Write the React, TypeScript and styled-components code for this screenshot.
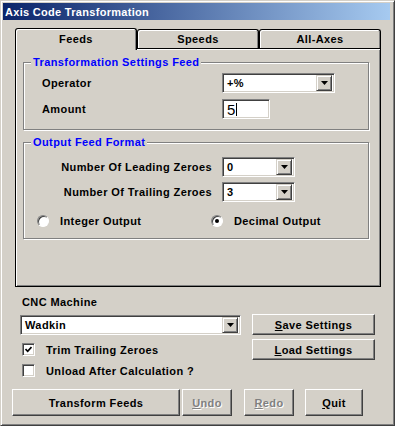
import { createGlobalStyle, styled } from "styled-components";

const GlobalStyle = createGlobalStyle`
  html, body {
    margin: 0;
    padding: 0;
    background: #d4d0c8;
  }
  body {
    font-family: "Liberation Sans", Arial, sans-serif;
    font-size: 11px;
    font-weight: bold;
    letter-spacing: 0.4px;
    color: #000;
  }
`;

const Window = styled.div`
  width: 395px;
  height: 426px;
  box-sizing: border-box;
  background: #d4d0c8;
  border: 1px solid;
  border-color: #d4d0c8 #404040 #404040 #d4d0c8;
  box-shadow: inset 1px 1px 0 #fff, inset -1px -1px 0 #808080;
  padding: 2px 4px 0 2px;
  display: flex;
  flex-direction: column;
`;

const TitleBar = styled.div`
  height: 17px;
  display: flex;
  align-items: center;
  padding-left: 2px;
  background: linear-gradient(to right, #0a246a, #a6caf0);
  color: #fff;
  letter-spacing: 0.3px;
`;

const Body = styled.div`
  padding: 8px 0 0 9px;
  display: flex;
  flex-direction: column;
`;

const TabControl = styled.div`
  margin-left: 3px;
  width: 366px;
  display: flex;
  flex-direction: column;
`;

const TabStrip = styled.div`
  display: flex;
  align-items: flex-end;
  height: 20px;
`;

const Tab = styled.div<{ $active?: boolean }>`
  width: 122px;
  box-sizing: border-box;
  height: ${(p) => (p.$active ? "22px" : "19px")};
  margin-bottom: ${(p) => (p.$active ? "-2px" : "0")};
  position: relative;
  z-index: ${(p) => (p.$active ? 1 : 0)};
  background: #d4d0c8;
  border: 1px solid #000;
  border-bottom: none;
  border-radius: 3px 3px 0 0;
  box-shadow: inset 1px 1px 0 #fff, inset -1px 0 0 #808080;
  display: flex;
  justify-content: center;
  padding-top: ${(p) => (p.$active ? "4px" : "3px")};
`;

const Panel = styled.div`
  height: 239px;
  box-sizing: border-box;
  border: 1px solid #000;
  box-shadow: inset 1px 1px 0 #fff, inset -1px -1px 0 #808080;
  padding: 7px 0 0 7px;
  display: flex;
  flex-direction: column;
`;

const GroupBox = styled.fieldset<{ $gap?: number }>`
  margin: ${(p) => p.$gap ?? 0}px 0 0 0;
  padding: 0;
  width: 346px;
  box-sizing: border-box;
  border: 1px solid #808080;
  box-shadow: inset 1px 1px 0 #fff, 1px 1px 0 #fff;
  min-inline-size: 0;
`;

const Legend = styled.legend`
  margin-left: 7px;
  padding: 0 2px;
  line-height: 13px;
  color: #0000ff;
  background: #d4d0c8;
`;

const SettingsGrid = styled.div`
  display: grid;
  grid-template-columns: 180px 1fr;
  grid-auto-rows: 20px;
  row-gap: 6px;
  align-items: center;
  padding: 4px 0 10px 18px;
`;

const FormatGrid = styled.div`
  display: grid;
  grid-template-columns: 188px 1fr;
  grid-auto-rows: 20px;
  column-gap: 10px;
  row-gap: 5px;
  align-items: center;
  padding-top: 8px;
`;

const RightLabel = styled.span`
  text-align: right;
`;

const RadioRow = styled.div`
  display: flex;
  height: 14px;
  margin: 12px 0 10px 13px;
`;

const RadioItem = styled.label<{ $width?: number }>`
  display: flex;
  align-items: center;
  gap: 11px;
  width: ${(p) => (p.$width ? `${p.$width}px` : "auto")};
`;

const RadioCircle = styled.span<{ $checked?: boolean }>`
  width: 12px;
  height: 12px;
  box-sizing: border-box;
  border-radius: 50%;
  border: 1px solid;
  border-color: #808080 #fff #fff #808080;
  box-shadow: inset 1px 1px 0 #404040;
  background: #fff;
  display: flex;
  align-items: center;
  justify-content: center;
  &::after {
    content: "";
    width: 4px;
    height: 4px;
    border-radius: 50%;
    background: ${(p) => (p.$checked ? "#000" : "transparent")};
  }
`;

const Sunken = styled.div<{ $width: number }>`
  width: ${(p) => p.$width}px;
  height: 20px;
  box-sizing: border-box;
  border: 1px solid;
  border-color: #808080 #fff #fff #808080;
  box-shadow: inset 1px 1px 0 #404040, inset -1px -1px 0 #d4d0c8;
  background: #fff;
  display: flex;
  align-items: center;
  padding: 2px 2px 2px 4px;
`;

const ComboText = styled.span`
  flex: 1;
`;

const DropButton = styled.span`
  width: 16px;
  height: 16px;
  box-sizing: border-box;
  background: #d4d0c8;
  border: 1px solid;
  border-color: #d4d0c8 #404040 #404040 #d4d0c8;
  box-shadow: inset 1px 1px 0 #fff, inset -1px -1px 0 #808080;
  display: flex;
  align-items: center;
  justify-content: center;
`;

const EditText = styled.span`
  font-size: 15px;
  font-weight: normal;
  letter-spacing: 0;
  display: flex;
  align-items: center;
`;

const Caret = styled.span`
  width: 1px;
  height: 13px;
  background: #000;
  margin-left: 1px;
`;

const CncLabel = styled.div`
  margin: 9px 0 0 10px;
  line-height: 13px;
`;

const MachineGrid = styled.div`
  display: grid;
  grid-template-columns: 221px 123px;
  grid-template-rows: 21px 21px 13px;
  column-gap: 11px;
  row-gap: 4px;
  align-items: center;
  margin: 5px 0 0 8px;
`;

const CheckItem = styled.label`
  display: flex;
  align-items: center;
  gap: 11px;
  margin-left: 2px;
`;

const CheckBox = styled.span`
  width: 13px;
  height: 13px;
  box-sizing: border-box;
  border: 1px solid;
  border-color: #808080 #fff #fff #808080;
  box-shadow: inset 1px 1px 0 #404040, inset -1px -1px 0 #d4d0c8;
  background: #fff;
  display: flex;
  align-items: center;
  justify-content: center;
`;

const Button = styled.button<{ $width: number; $left?: number; $height?: number }>`
  width: ${(p) => p.$width}px;
  height: ${(p) => p.$height ?? 21}px;
  margin-left: ${(p) => p.$left ?? 0}px;
  box-sizing: border-box;
  padding: 0;
  font: inherit;
  letter-spacing: inherit;
  color: #000;
  background: #d4d0c8;
  border: 1px solid;
  border-color: #fff #404040 #404040 #fff;
  box-shadow: inset -1px -1px 0 #808080;
  &:disabled {
    color: #808080;
    text-shadow: 1px 1px 0 #fff;
  }
`;

const ButtonRow = styled.div`
  display: flex;
  margin-top: 12px;
`;

const Arrow = () => (
  <svg width="7" height="4" viewBox="0 0 7 4">
    <path d="M0 0h7L3.5 4z" fill="#000" />
  </svg>
);

const Combo = ({ width, value }: { width: number; value: string }) => (
  <Sunken $width={width}>
    <ComboText>{value}</ComboText>
    <DropButton>
      <Arrow />
    </DropButton>
  </Sunken>
);

const Check = ({ checked, label }: { checked?: boolean; label: string }) => (
  <CheckItem>
    <CheckBox>
      {checked && (
        <svg width="7" height="7" viewBox="0 0 7 7">
          <path d="M0.5 3 L2.7 5.3 L6.5 1" fill="none" stroke="#000" strokeWidth="1.7" />
        </svg>
      )}
    </CheckBox>
    {label}
  </CheckItem>
);

export default function App() {
  return (
    <>
      <GlobalStyle />
      <Window>
        <TitleBar>Axis Code Transformation</TitleBar>
        <Body>
          <TabControl>
            <TabStrip>
              <Tab $active>Feeds</Tab>
              <Tab>Speeds</Tab>
              <Tab>All-Axes</Tab>
            </TabStrip>
            <Panel>
              <GroupBox>
                <Legend>Transformation Settings Feed</Legend>
                <SettingsGrid>
                  <span>Operator</span>
                  <Combo width={113} value="+%" />
                  <span>Amount</span>
                  <Sunken $width={48}>
                    <EditText>
                      5<Caret />
                    </EditText>
                  </Sunken>
                </SettingsGrid>
              </GroupBox>
              <GroupBox $gap={6}>
                <Legend>Output Feed Format</Legend>
                <FormatGrid>
                  <RightLabel>Number Of Leading Zeroes</RightLabel>
                  <Combo width={73} value="0" />
                  <RightLabel>Number Of Trailing Zeroes</RightLabel>
                  <Combo width={73} value="3" />
                </FormatGrid>
                <RadioRow>
                  <RadioItem $width={174}>
                    <RadioCircle />
                    Integer Output
                  </RadioItem>
                  <RadioItem>
                    <RadioCircle $checked />
                    Decimal Output
                  </RadioItem>
                </RadioRow>
              </GroupBox>
            </Panel>
          </TabControl>
          <CncLabel>CNC Machine</CncLabel>
          <MachineGrid>
            <Combo width={221} value="Wadkin" />
            <Button $width={123}>
              <u>S</u>ave Settings
            </Button>
            <Check checked label="Trim Trailing Zeroes" />
            <Button $width={123}>
              <u>L</u>oad Settings
            </Button>
            <Check label="Unload After Calculation ?" />
          </MachineGrid>
          <ButtonRow>
            <Button $width={168} $height={27}>
              Transform Feeds
            </Button>
            <Button $width={50} $left={2} $height={27} disabled>
              <u>U</u>ndo
            </Button>
            <Button $width={50} $left={12} $height={27} disabled>
              <u>R</u>edo
            </Button>
            <Button $width={58} $left={11} $height={27}>
              <u>Q</u>uit
            </Button>
          </ButtonRow>
        </Body>
      </Window>
    </>
  );
}
